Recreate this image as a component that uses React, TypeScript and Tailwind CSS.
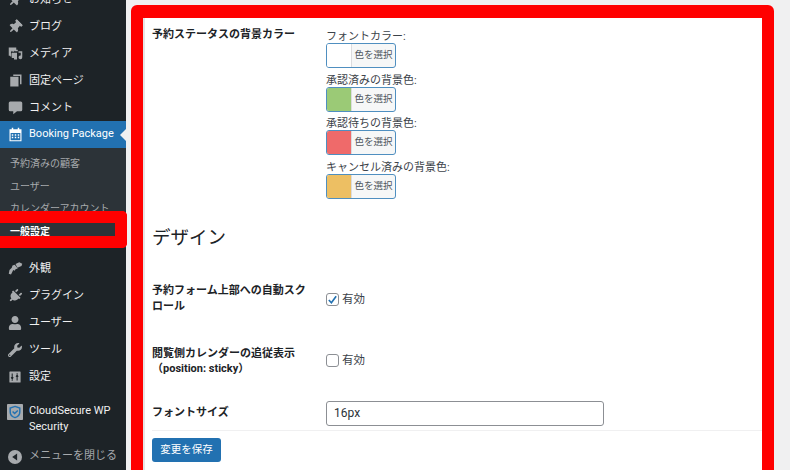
import { FaThumbtack, FaUser, FaWrench, FaPlug } from 'react-icons/fa';
import type { ReactNode } from 'react';

const font = { fontFamily: 'Roboto, "Noto Sans CJK JP", sans-serif' };

const PinIcon = () => <FaThumbtack className="rotate-45" />;

const MediaIcon = () => (
  <svg viewBox="0 0 20 20" className="w-[15px] h-[15px]" fill="currentColor">
    <path d="M1 2h10v3h2v2H9.500a3 3 0 0 0-5 3.500V14H3v-1H1z" />
    <circle cx="7" cy="6" r="1.800" />
    <path d="M5 9h7v9H8v-2H5z" />
    <path d="M14 7h5v8a2.500 2.500 0 1 1-2-2.400V9h-3z" />
  </svg>
);

const PagesIcon = () => (
  <svg viewBox="0 0 20 20" className="w-[15px] h-[15px]" fill="currentColor">
    <path d="M7 2h11v13h-2V4H7z" />
    <path d="M3 5h11v13H3z" />
  </svg>
);

const CommentIcon = () => (
  <svg viewBox="0 0 20 20" className="w-[15px] h-[15px]" fill="currentColor">
    <path d="M3 2h14a2 2 0 0 1 2 2v9a2 2 0 0 1-2 2h-5l-5 4v-4H3a2 2 0 0 1-2-2V4a2 2 0 0 1 2-2z" />
  </svg>
);

const CalendarIcon = () => (
  <svg viewBox="0 0 20 20" className="w-[15px] h-[15px]" fill="currentColor">
    <path d="M2 3h3V1h2v2h6V1h2v2h3v16H2zm1.500 5v9.500h13V8z" fillRule="evenodd" />
    <path d="M5 9.500h2v2H5zM9 9.500h2v2H9zM13 9.500h2v2h-2zM5 13h2v2H5zM9 13h2v2H9zM13 13h2v2h-2z" />
  </svg>
);

const BrushIcon = () => (
  <svg viewBox="0 0 20 20" className="w-[15px] h-[15px]" fill="currentColor">
    <path d="M10 4l5-2.500 4 2-1 3-5.500 2.500z" />
    <path d="M9 5l4 5-3 1-1 2-2-1-3 6-3-1 1-5 3-3 1-3z" />
  </svg>
);

const SettingsIcon = () => (
  <svg viewBox="0 0 20 20" className="w-[14px] h-[14px]">
    <rect x="2" y="2" width="16" height="16" rx="1" fill="currentColor" />
    <path d="M6 5v7M4.500 10.500 6 13l1.500-2.500M6 14v1.500M13 15V8M11.500 9.500 13 7l1.500 2.500M13 6V4.500" stroke="#1d2327" strokeWidth="1.500" fill="none" />
  </svg>
);

const ShieldIcon = () => (
  <svg viewBox="0 0 20 20" className="w-[16px] h-[16px]">
    <rect width="20" height="20" rx="1" fill="#a7aaad" />
    <path d="M10 3l6 2v5c0 3.500-2.500 6-6 7-3.500-1-6-3.500-6-7V5z" fill="none" stroke="#2271b1" strokeWidth="1.800" />
    <path d="M7 9.500l2.500 2.500L13.500 8" fill="none" stroke="#2271b1" strokeWidth="1.800" />
  </svg>
);

const CollapseIcon = () => (
  <svg viewBox="0 0 20 20" className="w-[14px] h-[14px]">
    <circle cx="10" cy="10" r="10" fill="#a7aaad" />
    <path d="M13 5v10L6 10z" fill="#1d2327" />
  </svg>
);

function MenuItem({ icon, label }: { icon: ReactNode; label: string }) {
  return (
    <div className="flex items-center h-[27px] text-[#f0f0f1]">
      <span className="w-[29px] flex justify-center pl-[1px] text-[#a7aaad] text-[14px]">{icon}</span>
      <span className="pt-[1px]">{label}</span>
    </div>
  );
}

function ColorPicker({ label, color }: { label: string; color: string }) {
  return (
    <div className="h-[43.5px]">
      <div className="h-[16px] leading-[20px] text-[#3c434a]">{label}</div>
      <div className="flex w-[70px] h-[25px] border border-[#4f8fc0] rounded-[3px] overflow-hidden bg-[#f6f7f7]">
        <span className="w-[25px] border-r border-[#dcdcde]" style={{ backgroundColor: color }} />
        <span className="flex-1 text-center text-[9.5px] leading-[22px] text-[#50575e]">色を選択</span>
      </div>
    </div>
  );
}

function Check({ checked, label }: { checked: boolean; label: string }) {
  return (
    <div className="flex items-center gap-[3px] text-[11.5px] text-[#3c434a]">
      <span className="w-[13px] h-[13px] border border-[#8c8f94] rounded-[3px] bg-white flex items-center justify-center">
        {checked && (
          <svg viewBox="0 0 12 12" className="w-[11px] h-[11px]">
            <path d="M2 6.500l2.800 3L10 2.500" fill="none" stroke="#2271b1" strokeWidth="1.800" />
          </svg>
        )}
      </span>
      <span>{label}</span>
    </div>
  );
}

export default function App() {
  return (
    <div className="flex h-[470px] w-[790px] overflow-hidden bg-[#f0f0f1] text-[11px]" style={font}>
      <aside className="relative w-[126px] shrink-0 bg-[#1d2327] text-[11px]">
        <div className="-mt-[14px]">
          <MenuItem icon={<PinIcon />} label="お知らせ" />
          <MenuItem icon={<PinIcon />} label="ブログ" />
          <MenuItem icon={<MediaIcon />} label="メディア" />
          <MenuItem icon={<PagesIcon />} label="固定ページ" />
          <MenuItem icon={<CommentIcon />} label="コメント" />
        </div>
        <div className="relative flex items-center h-[27px] bg-[#2271b1] text-white">
          <span className="w-[29px] flex justify-center pl-[1px]"><CalendarIcon /></span>
          <span>Booking Package</span>
          <span className="absolute right-0 top-[8px] border-y-[6px] border-r-[6px] border-y-transparent border-r-[#f0f0f1]" />
        </div>
        <div className="bg-[#2c3338] h-[100px] pt-[3px] text-[10px] text-[#a7aaad]">
          <div className="h-[22.700px] leading-[22px] pl-[10px] pt-[2px]">予約済みの顧客</div>
          <div className="h-[22.700px] leading-[22px] pl-[10px] pt-[2px]">ユーザー</div>
          <div className="h-[22.700px] leading-[22px] pl-[10px] pt-[2px]">カレンダーアカウント</div>
          <div className="h-[22.700px] leading-[22px] pl-[10px] pt-[2px] font-bold text-white">一般設定</div>
        </div>
        <div className="mt-[7px]">
          <MenuItem icon={<BrushIcon />} label="外観" />
          <MenuItem icon={<FaPlug className="rotate-45" />} label="プラグイン" />
          <MenuItem icon={<FaUser />} label="ユーザー" />
          <MenuItem icon={<FaWrench />} label="ツール" />
          <MenuItem icon={<SettingsIcon />} label="設定" />
        </div>
        <div className="flex mt-[13px] text-[#f0f0f1] leading-[16px]">
          <span className="w-[29px] flex justify-center pl-[1px] pt-[1px]"><ShieldIcon /></span>
          <span>CloudSecure WP<br />Security</span>
        </div>
        <div className="flex items-center h-[27px] mt-[8px] text-[#a7aaad]">
          <span className="w-[29px] flex justify-center pl-[1px]"><CollapseIcon /></span>
          <span>メニューを閉じる</span>
        </div>
        {/* red marker drawn on top of the submenu */}
        <div className="absolute left-0 top-[211px] w-[127px] h-[37px] border-y-[12px] border-r-[12px] border-[#ff0000] rounded-r-[5px]" />
      </aside>

      <main className="flex-1 pl-[5px] pr-[16px] pt-[5px] min-w-0">
        <div className="h-[500px] border-[12px] border-t-[13px] border-[#ff0000] rounded-[6px] bg-white">
          <div className="h-full border-l-2 border-[#e5e5e5] pl-[7px]">
            <div className="flex pt-[7px]">
              <div className="w-[174px] font-bold text-[#1d2327] leading-[20px]">予約ステータスの背景カラー</div>
              <div className="pt-[2px]">
                <ColorPicker label="フォントカラー:" color="#ffffff" />
                <ColorPicker label="承認済みの背景色:" color="#9bca76" />
                <ColorPicker label="承認待ちの背景色:" color="#ef6a6a" />
                <ColorPicker label="キャンセル済みの背景色:" color="#edbf63" />
              </div>
            </div>
            <h2 className="mt-[24px] text-[18.5px] leading-[26px] text-[#1d2327]">デザイン</h2>
            <div className="flex mt-[32px]">
              <div className="w-[174px] pr-[16px] font-bold text-[#1d2327] leading-[16px]">予約フォーム上部への自動スクロール</div>
              <div className="pt-[8px]"><Check checked label="有効" /></div>
            </div>
            <div className="flex mt-[31px]">
              <div className="w-[174px] pr-[16px] font-bold text-[#1d2327] leading-[15px]">閲覧側カレンダーの追従表示（position: sticky）</div>
              <div className="pt-[6px]"><Check checked={false} label="有効" /></div>
            </div>
            <div className="flex items-center mt-[25px]">
              <div className="w-[174px] font-bold text-[#1d2327]">フォントサイズ</div>
              <div className="w-[278px] h-[25px] border border-[#8c8f94] rounded-[3px] px-[7px] leading-[23px] text-[12px] text-[#2c3338]">16px</div>
            </div>
            <div className="h-[1px] bg-[#f0f0f1] mt-[4px]" />
            <button className="block mt-[7px] w-[69px] h-[24px] bg-[#2271b1] rounded-[3px] text-white text-[10.500px]">変更を保存</button>
            <div className="ml-[174px] mt-[8px] w-[278px] h-[25px] border border-[#8c8f94] rounded-[3px]" />
          </div>
        </div>
      </main>
    </div>
  );
}
